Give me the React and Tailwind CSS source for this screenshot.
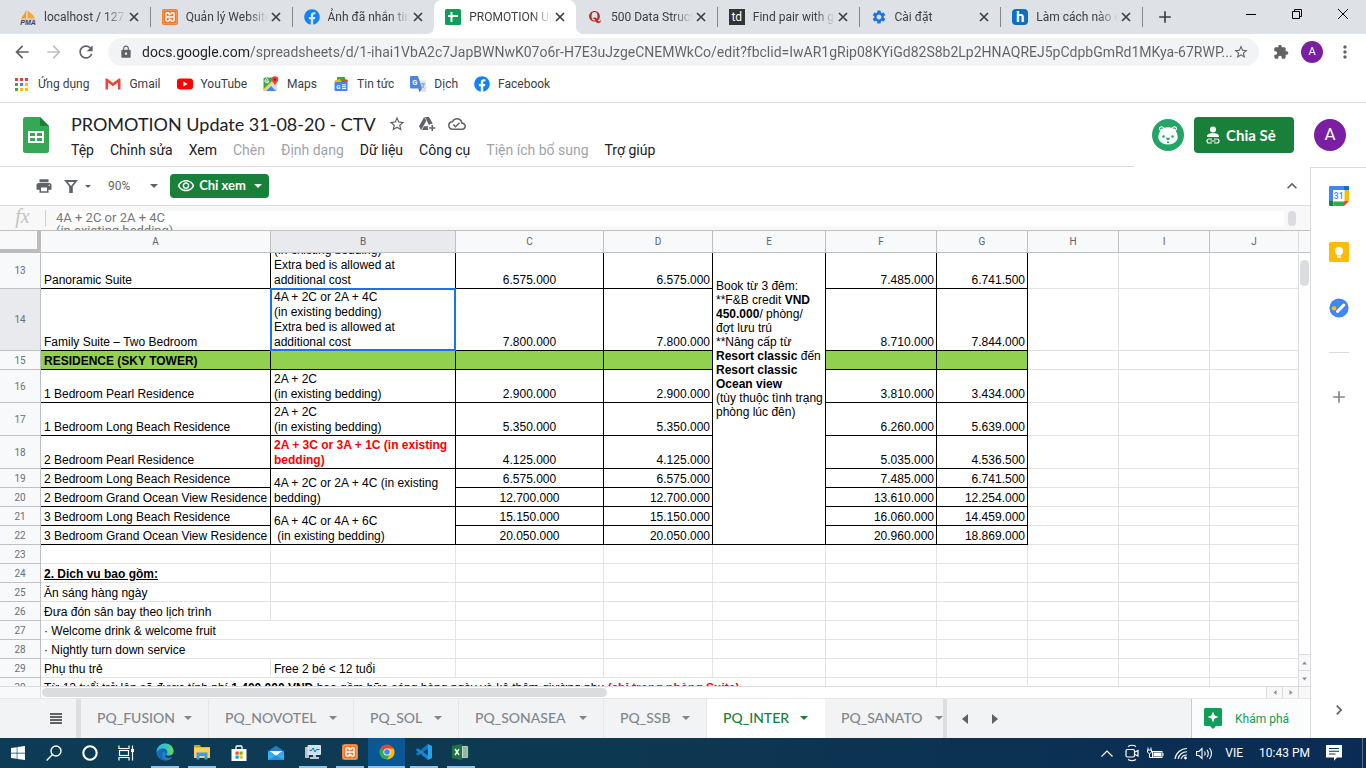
import React from "react";
import {
  MdArrowBack, MdArrowForward, MdRefresh, MdLock, MdStarBorder, MdExtension, MdMoreVert,
  MdOutlineCloudDone, MdPrint, MdOutlineVisibility,
  MdKeyboardArrowUp, MdKeyboardArrowRight, MdAdd, MdSettings,
} from "react-icons/md";
import { FaFacebook, FaQuora, FaWindows } from "react-icons/fa";

/* ---------- small drawings ---------- */

const PmaIcon = () => (
  <svg viewBox="0 0 16 16" className="size-4">
    <path d="M6.500 .5 L5.800 9.500 H1 C3 7 5 4 6.500 .5Z" fill="#f89c0e" />
    <path d="M7.500 1.500 C10 3 13.500 6 15 9.500 H7.200Z" fill="#f7a838" />
    <path d="M1 10 L15 10 L13.500 11.500 H2.500Z" fill="#c9c9c9" />
    <text x="8" y="15.800" textAnchor="middle" fontSize="7" fontWeight="700" fontStyle="italic" fontFamily="Liberation Sans" fill="#3f3c6b">PMA</text>
  </svg>
);

const XamppIcon = ({ className = "size-4" }) => (
  <svg viewBox="0 0 16 16" className={className}>
    <rect width="16" height="16" rx="2.500" fill="#f37623" />
    <rect x="1.200" y="1.200" width="13.600" height="13.600" rx="2" fill="none" stroke="#f9b98c" strokeWidth=".6" />
    <path d="M7.300 6 V5.200 A1.400 1.400 0 0 0 5.900 3.800 H5.300 A1.400 1.400 0 0 0 3.900 5.200 V6.400 A1.500 1.500 0 0 0 5.400 7.900 H10.700 A1.500 1.500 0 0 0 12.200 6.400 V5.200 A1.400 1.400 0 0 0 10.800 3.800 H10.200 A1.400 1.400 0 0 0 8.800 5.200 M5.400 7.900 A1.500 1.500 0 0 0 3.900 9.400 V10.800 A1.400 1.400 0 0 0 5.300 12.200 H5.900 A1.400 1.400 0 0 0 7.300 10.800 V10 M8.800 10.400 V10.800 A1.400 1.400 0 0 0 10.200 12.200 H10.800 A1.400 1.400 0 0 0 12.200 10.800 V9.400 A1.500 1.500 0 0 0 10.700 7.900" fill="none" stroke="#fff" strokeWidth="1.500" strokeLinecap="round" />
  </svg>
);

const SheetsTabIcon = () => (
  <svg viewBox="0 0 16 16" className="size-4">
    <rect width="16" height="16" rx="1.500" fill="#0f9d58" />
    <path d="M3 7 H13 M6.500 3 V13" stroke="#fff" strokeWidth="2" />
  </svg>
);

const CloseMark = () => (
  <svg viewBox="0 0 8 8" className="size-2 overflow-visible" stroke="#3c4043" strokeWidth="1.700">
    <path d="M0 0 L8 8 M8 0 L0 8" />
  </svg>
);

const AppsIcon = () => (
  <svg viewBox="0 0 15 13" className="h-[13px] w-[15px]">
    {["#ea4335", "#ea4335", "#ea4335", "#34a853", "#4285f4", "#fbbc05", "#34a853", "#fbbc05", "#fbbc05"].map((c, i) => (
      <rect key={i} x={(i % 3) * 5} y={Math.floor(i / 3) * 5} width="3" height="3" fill={c} />
    ))}
  </svg>
);

const GmailIcon = () => (
  <svg viewBox="0 0 16 12" className="h-3 w-4">
    <rect x="1" y="1" width="14" height="10.500" fill="#f2f2f2" />
    <path d="M.5 1.200 V11.500 H3 V4.500 L8 8.300 L13 4.500 V11.500 H15.500 V1.200 A1.200 1.200 0 0 0 14 .4 L8 5 L2 .4 A1.200 1.200 0 0 0 .5 1.200Z" fill="#e04a3f" />
  </svg>
);

const YoutubeIcon = () => (
  <svg viewBox="0 0 16 12" className="h-3 w-4">
    <rect y=".5" width="16" height="11" rx="3" fill="#f00" />
    <path d="M6.400 3.500 L10.600 6 L6.400 8.500Z" fill="#fff" />
  </svg>
);

const MapsIcon = () => (
  <svg viewBox="0 0 16 16" className="size-4">
    <rect x=".5" y="1.500" width="13.500" height="13.500" rx="1.500" fill="#34a853" />
    <path d="M1 15 L14 2.500 V13.500 A1.500 1.500 0 0 1 12.500 15Z" fill="#d8dce3" />
    <path d="M3 15 L8 10 L13 15Z" fill="#4285f4" />
    <path d="M1 14 L13.500 2" stroke="#fbd34c" strokeWidth="1.800" />
    <path d="M2.800 5 H5.800 A1.900 1.900 0 1 1 5.200 3.400" fill="none" stroke="#fff" strokeWidth="1" />
    <path d="M12 .3 A3.300 3.300 0 0 1 15.300 3.600 C15.300 6 12.600 6.800 12 10 C11.400 6.800 8.700 6 8.700 3.600 A3.300 3.300 0 0 1 12 .3Z" fill="#ea4335" />
    <circle cx="12" cy="3.600" r="1.200" fill="#8c1d18" />
  </svg>
);

const NewsIcon = () => (
  <svg viewBox="0 0 16 16" className="size-4">
    <rect x="4" y="1" width="8" height="5" rx=".6" fill="#34a853" />
    <path d="M10 2.500 L15 4 L14 8 H9Z" fill="#ea4335" />
    <path d="M1.500 4.500 L7 3 L9 8 H2Z" fill="#fbbc05" />
    <rect x="1.500" y="6" width="13" height="9" rx="1" fill="#4285f4" />
    <text x="5.300" y="12.800" textAnchor="middle" fontSize="6" fontWeight="700" fontFamily="Roboto" fill="#fff">G</text>
    <path d="M9 8.800 H13 M9 10.700 H13 M9 12.600 H13" stroke="#fff" strokeWidth="1" />
  </svg>
);

const TranslateIcon = () => (
  <svg viewBox="0 0 16 16" className="size-4">
    <path d="M6 4.500 H15 A1 1 0 0 1 16 5.500 V15 A1 1 0 0 1 15 16 H9Z" fill="#dfe3ea" />
    <path d="M1 0 H8 L12 12.500 H1 A1 1 0 0 1 0 11.500 V1 A1 1 0 0 1 1 0Z" fill="#4a86e8" />
    <path d="M8.500 12.500 H12 L9.500 16Z" fill="#3367d6" />
    <path d="M10.500 8 H15 M12.700 7 V8 M14 8 C13.500 10 12.500 11.500 11.500 12 M11.700 9.500 L14.300 12.500" stroke="#7d8ba1" strokeWidth=".8" fill="none" />
    <text x="4.800" y="9" textAnchor="middle" fontSize="7.500" fontWeight="700" fontFamily="Roboto" fill="#fff">G</text>
  </svg>
);

const SheetsLogo = () => (
  <svg viewBox="0 0 26 36" className="h-9 w-[26px]">
    <path d="M2.500 0 H17 L26 9 V33.500 A2.500 2.500 0 0 1 23.500 36 H2.500 A2.500 2.500 0 0 1 0 33.500 V2.500 A2.500 2.500 0 0 1 2.500 0Z" fill="#34a853" />
    <path d="M17 0 L26 9 H17Z" fill="#188038" />
    <rect x="5" y="14" width="16" height="12" fill="#fff" />
    <path d="M7 16 H12 V19 H7Z M14 16 H19 V19 H14Z M7 21 H12 V24 H7Z M14 21 H19 V24 H14Z" fill="#34a853" />
  </svg>
);

const DriveAddIcon = () => (
  <svg viewBox="0 0 18 16" className="h-4 w-[18px]" fill="#5f6368">
    <path d="M6.200 1 L1 10.200 L3.200 14 L8.400 4.800Z" />
    <path d="M7 1 H11 L14.800 7.800 C13.300 7.600 12 8 11 9Z" />
    <path d="M6 10.200 H10 C9.700 11.600 9.800 12.800 10.500 14 H4Z" />
    <path d="M13.500 9 H15 V11.300 H17.300 V12.800 H15 V15 H13.500 V12.800 H11.300 V11.300 H13.500Z" />
  </svg>
);

const BearIcon = () => (
  <svg viewBox="0 0 32 32" className="size-8 shrink-0">
    <circle cx="16" cy="16" r="16" fill="#23a566" />
    <path d="M7 10 C6.500 7.500 10 6 12 8.800 Q16 7.600 20 8.800 C22 6 25.500 7.500 25 10 C24.900 11 24.300 11.500 23.800 12 C25.500 15 26.500 18.500 25 21 C23 24.300 19.500 25.500 16 25.500 C12.500 25.500 9 24.300 7 21 C5.500 18.500 6.500 15 8.200 12 C7.700 11.500 7.100 11 7 10Z" fill="#fff" />
    <path d="M8.500 10.300 C8.300 8.900 9.800 8.500 10.700 9.500 M23.500 10.300 C23.700 8.900 22.200 8.500 21.300 9.500" stroke="#23a566" strokeWidth="1.200" fill="none" />
    <circle cx="11.500" cy="17.500" r="1.300" fill="#23a566" />
    <circle cx="20.500" cy="17.500" r="1.300" fill="#23a566" />
    <path d="M14 18.800 H18 L17 21 H15Z M15 22.500 H17 V24 H15Z" fill="#23a566" />
  </svg>
);

const ShareIcon = () => (
  <svg viewBox="0 0 14 18" className="h-[18px] w-3.5" fill="none">
    <circle cx="7" cy="3.500" r="3" fill="#fff" />
    <path d="M1 10.500 C1 7.500 4.500 7.200 7 7.200 S13 7.500 13 10.500 V11 H1Z" fill="#fff" />
    <path d="M6 13 H3 A2 2 0 0 0 3 17 H6 M8 13 H11 A2 2 0 0 1 11 17 H8 M4.500 15 H9.500" stroke="#fff" strokeWidth="1.200" />
  </svg>
);

const FilterIcon = () => (
  <svg viewBox="0 0 14 13" className="h-[13px] w-3.5">
    <path fillRule="evenodd" d="M0 0 H14 L8.800 6.500 V13 H5.200 V6.500Z M3.700 2 L7 6.100 L10.300 2Z" fill="#5f6368" />
  </svg>
);

const Caret = ({ className }) => (
  <svg viewBox="0 0 8 4" className={className} fill="currentColor"><path d="M0 0 H8 L4 4Z" /></svg>
);

const ArrowMark = ({ dir, className }) => {
  const d = { up: "M0 7 L4 1 L8 7Z", down: "M0 1 H8 L4 7Z", left: "M7 0 V8 L1 4Z", right: "M1 0 V8 L7 4Z" }[dir];
  return <svg viewBox="0 0 8 8" preserveAspectRatio="none" className={className} fill="currentColor"><path d={d} /></svg>;
};

const CalendarIcon = () => (
  <svg viewBox="0 0 20 20" className="size-5">
    <path d="M1 0 H15 V4.500 H4.500 V15 H0 V1 A1 1 0 0 1 1 0Z" fill="#4285f4" />
    <path d="M15 0 H18.800 A1 1 0 0 1 20 1 V4.500 H15Z" fill="#1967d2" />
    <path d="M15 4.500 H20 V15 H15Z" fill="#fbbc04" />
    <path d="M0 15 H4.500 V20 H1 A1 1 0 0 1 0 19Z" fill="#188038" />
    <path d="M4.500 15 H15 V20 H4.500Z" fill="#34a853" />
    <path d="M15 15 H20 L15 20Z" fill="#ea4335" />
    <rect x="4" y="4" width="11.500" height="11.500" fill="#fff" />
    <text x="9.700" y="13" textAnchor="middle" fontSize="8.500" fontWeight="500" fontFamily="Roboto" fill="#4285f4">31</text>
  </svg>
);

const KeepIcon = () => (
  <svg viewBox="0 0 20 20" className="size-5">
    <rect width="20" height="20" rx="1.500" fill="#fbbc04" />
    <circle cx="10" cy="9" r="4" fill="#fff" />
    <rect x="8" y="11" width="4" height="2.500" fill="#fff" />
    <rect x="8" y="14.300" width="4" height="1.400" fill="#fff" />
  </svg>
);

const TasksIcon = () => (
  <svg viewBox="0 0 20 20" className="size-5">
    <circle cx="10" cy="10" r="9.600" fill="#4285f4" />
    <circle cx="5" cy="10.200" r="2.300" fill="#fbbc04" />
    <path d="M8.500 13.500 L14.800 7" stroke="#fff" strokeWidth="3" strokeLinecap="round" />
  </svg>
);

const ExploreIcon = () => (
  <svg viewBox="0 0 18 21" className="h-[21px] w-[18px]">
    <path d="M1.500 0 H16.500 A1.500 1.500 0 0 1 18 1.500 V16.500 A1.500 1.500 0 0 1 16.500 18 H12 L9 21 L6 18 H1.500 A1.500 1.500 0 0 1 0 16.500 V1.500 A1.500 1.500 0 0 1 1.500 0Z" fill="#0f9d58" />
    <path d="M9 3.500 L10.600 7.400 L14.500 9 L10.600 10.600 L9 14.500 L7.400 10.600 L3.500 9 L7.400 7.400Z" fill="#fff" />
  </svg>
);

/* ---------- taskbar drawings ---------- */

const SearchGlass = () => (
  <svg viewBox="0 0 16 16" className="size-4" fill="none" stroke="#fff" strokeWidth="1.400">
    <circle cx="10" cy="6" r="5" /><path d="M6.500 9.500 L.6 15.500" />
  </svg>
);
const CortanaRing = () => (
  <svg viewBox="0 0 16 16" className="size-4"><circle cx="8" cy="8" r="6.700" fill="none" stroke="#fff" strokeWidth="2.100" /></svg>
);
const TaskView = () => (
  <svg viewBox="0 0 17 16" className="h-4 w-[17px]" fill="none" stroke="#fff" strokeWidth="1.200">
    <path d="M1 .5 V3.500 H11 V.5 M1 15.500 V12.500 H11 V15.500" /><rect x="1.500" y="5.500" width="9" height="5" /><path d="M14.500 .5 V15.500" /><path d="M14.500 4 V7" strokeWidth="3" />
  </svg>
);
const EdgeIcon = () => (
  <svg viewBox="0 0 18 18" className="size-[18px]">
    <defs>
      <linearGradient id="edgeTop" x1="0" x2="1"><stop offset="0" stopColor="#2bb4ee" /><stop offset=".6" stopColor="#35c8b4" /><stop offset="1" stopColor="#6fdc4d" /></linearGradient>
    </defs>
    <circle cx="9" cy="9" r="8.500" fill="#1d86d8" />
    <path d="M10.300 11.400 L17.500 9.500 L17.500 14 L13 17.500 L9 14Z" fill="#0c3a56" />
    <path d="M.6 8.500 C1.500 3.200 5 .5 9.200 .5 C14 .5 17.500 4 17.500 8 C17.500 11 15.400 12.500 13 12.500 C11.500 12.500 10.300 12 10.300 11.400 C10.300 10.900 11.300 10.400 11.300 9 C11.300 7 9.300 5.500 6.800 5.500 C4 5.500 1.800 6.800 .6 8.500Z" fill="url(#edgeTop)" />
    <path d="M6.800 9 C5 12 7 17 12 17 C9.500 17.800 3.500 17.500 1.500 12.500 C.5 9.500 3 6 6.800 5.500 C9.500 5.500 11.300 7 11.300 9 C11.300 9.900 10.300 10.900 10.300 11.400 C9 11.500 8.300 10.500 8.500 8.600Z" fill="#1668b8" />
    <path d="M6.800 9 C6 13 9 14.800 12 14.800 C13.800 14.800 15.300 14.300 16.300 13.500 C15 16 13 17.300 11 17.300 C7 17 4.800 12.500 6.800 9Z" fill="#1a7fd4" />
  </svg>
);
const FolderIcon = () => (
  <svg viewBox="0 0 18 16" className="h-4 w-[18px]">
    <path d="M1 1 H7 L8 3 H17 V6 H1Z" fill="#dd9b14" />
    <path d="M1 3.500 H17 V14 H1Z" fill="#fbd15b" />
    <path d="M3.500 15.500 V8.500 H14.500 V15.500 H11.500 V12 H6.500 V15.500Z" fill="#3d9be8" />
  </svg>
);
const StoreIcon = () => (
  <svg viewBox="0 0 16 17" className="h-[17px] w-4">
    <path d="M5 4.500 V2 A1 1 0 0 1 6 1 H10 A1 1 0 0 1 11 2 V4.500" fill="none" stroke="#fff" strokeWidth="1.300" />
    <path d="M.5 4 H15.500 V16 H.5Z" fill="#fff" />
    <rect x="4.500" y="6.500" width="3.200" height="3.200" fill="#f25022" /><rect x="8.500" y="6.500" width="3.200" height="3.200" fill="#7fba00" />
    <rect x="4.500" y="10.500" width="3.200" height="3.200" fill="#00a4ef" /><rect x="8.500" y="10.500" width="3.200" height="3.200" fill="#ffb900" />
  </svg>
);
const MailIcon = () => (
  <svg viewBox="0 0 18 16" className="h-4 w-[18px]">
    <path d="M1 6 L9 .8 L17 6 V15 H1Z" fill="#1b7fd0" />
    <path d="M2.500 6 H15.500 L9 11Z" fill="#f4f8fb" />
    <path d="M1 6 L9 11 L17 6 V15 H1Z" fill="#32b0f2" />
    <path d="M1 15 L9 10.500 L17 15Z" fill="#1e93e0" />
  </svg>
);
const MonitorIcon = () => (
  <svg viewBox="0 0 18 16" className="h-4 w-[18px]">
    <rect x="1" y="3" width="4" height="11" fill="#b9c0c6" />
    <rect x="3.500" y="1" width="13.500" height="10" rx="1" fill="#dfe4e8" />
    <rect x="5" y="2.500" width="10.500" height="7" fill="#bfe3f7" />
    <path d="M5.500 6.500 H7.500 L9 4 L11 8 L12.500 5.500 H15.500" stroke="#1274b5" fill="none" />
    <path d="M9 11 H12 V13 H15 V15 H6 V13 H9Z" fill="#c5ccd1" />
  </svg>
);
const ChromeIcon = () => (
  <svg viewBox="0 0 16 16" className="size-4">
    <path d="M8 8 L1.500 4.300 A7.500 7.500 0 0 1 14.500 4.300Z" fill="#ea4335" />
    <path d="M8 8 L1.500 4.250 A7.500 7.500 0 0 0 8 15.500 L11.500 9.500Z" fill="#34a853" />
    <path d="M8 4.500 H14.700 A7.500 7.500 0 0 1 8 15.500 L11 9.500Z" fill="#fbbc05" />
    <circle cx="8" cy="8" r="3.600" fill="#fff" /><circle cx="8" cy="8" r="2.800" fill="#4285f4" />
  </svg>
);
const VsCodeIcon = () => (
  <svg viewBox="0 0 18 18" className="size-[18px]">
    <path d="M13 1 V5.500 L3 12.800 L1 11.500 V10.800Z" fill="#0a79c4" />
    <path d="M13 17 V12.500 L3 5.200 L1 6.500 V7.200Z" fill="#1287d4" />
    <path d="M12.800 1 L17 3 V15 L12.800 17Z" fill="#25a4ef" />
  </svg>
);
const ExcelIcon = () => (
  <svg viewBox="0 0 17 16" className="h-4 w-[17px]">
    <path d="M9 2 H16 V14 H9Z" fill="#fff" stroke="#1f7244" strokeWidth=".8" />
    <path d="M10.500 4 H15 M10.500 6 H15 M10.500 8 H15 M10.500 10 H15 M10.500 12 H15" stroke="#1f7244" strokeWidth="1" />
    <path d="M0 1.800 L10 0 V16 L0 14.200Z" fill="#1f7244" />
    <path d="M3 5 L7 11 M7 5 L3 11" stroke="#fff" strokeWidth="1.400" />
  </svg>
);

const MeetNow = () => (
  <svg viewBox="0 0 14 18" className="h-[18px] w-3.5" fill="none" stroke="#fff" strokeWidth="1.200">
    <path d="M3 2.500 Q7 0 11 2.500 M3 15.500 Q7 18 11 15.500" /><rect x="1" y="5.500" width="8.500" height="7.500" rx="1.500" /><path d="M10 8 L13 6.500 V12 L10 10.500" />
  </svg>
);
const Battery = () => (
  <svg viewBox="0 0 17 13" className="h-[13px] w-[17px]" fill="none" stroke="#fff">
    <rect x="5.500" y="4.500" width="9.500" height="6" /><rect x="7" y="6" width="6.500" height="3" fill="#fff" /><path d="M16 6 V9 M1 .5 V3 M4 .5 V3 M.5 3 H4.500 V5 L2.500 7 L.5 5Z M2.500 7 V10.500 H5" />
  </svg>
);
const Wifi = () => (
  <svg viewBox="0 0 14 14" className="size-3.5" fill="none" stroke="#fff" strokeWidth="1.100">
    <path d="M1 13 A12 12 0 0 1 13 2.500 M4 13 A9 9 0 0 1 13 5.800 M7 13 A6 6 0 0 1 13 9" /><circle cx="11.500" cy="12" r="1.400" fill="#fff" stroke="none" />
  </svg>
);
const Speaker = () => (
  <svg viewBox="0 0 17 13" className="h-[13px] w-[17px]" fill="none" stroke="#fff" strokeWidth="1.100">
    <path d="M.6 4.500 H3 L6 1.500 V11.500 L3 8.500 H.6Z M8.500 4.500 Q9.800 6.500 8.500 8.500 M11 2.800 Q13.500 6.500 11 10.200 M13.500 1 Q17.500 6.500 13.500 12" />
  </svg>
);
const NotifyIcon = () => (
  <svg viewBox="0 0 16 16" className="size-4">
    <path d="M0 0 H16 V12.500 H11 L8 15.800 V12.500 H0Z" fill="#fff" /><path d="M3 3.500 H13 M3 6.200 H13 M3 9 H9.500" stroke="#0b2f50" strokeWidth="1.100" />
  </svg>
);

/* ---------- browser chrome ---------- */

const browserTabs = [
  { title: "localhost / 127.0.0.1", icon: <PmaIcon />, sep: true },
  { title: "Quản lý Website", icon: <XamppIcon />, sep: true },
  { title: "Ảnh đã nhắn tin", icon: <FaFacebook className="size-4 text-[#1183f6]" /> },
  { title: "PROMOTION Update", icon: <SheetsTabIcon />, active: true },
  { title: "500 Data Structures", icon: <FaQuora className="size-3.5 text-[#b92b27]" />, sep: true },
  { title: "Find pair with given", icon: <span className="grid size-4 place-items-center bg-[#333] text-[12px] leading-none text-white">td</span>, sep: true },
  { title: "Cài đặt", icon: <MdSettings className="size-4 text-[#1a73e8]" />, sep: true },
  { title: "Làm cách nào để", icon: <span className="grid size-4 place-items-center rounded-sm bg-[#0c6fc0] text-[15px] leading-none font-bold text-white">h</span>, sep: true },
];

function TabStrip() {
  return (
    <div className="flex h-[34px] shrink-0 bg-[#dee1e6] pl-[9px] text-[12px] text-[#3c4043]">
      <div className="flex w-[1134px] min-w-0">
        {browserTabs.map((t) => (
          <div
            key={t.title}
            className={
              "relative flex min-w-0 flex-1 items-center " +
              (t.active
                ? "rounded-t-lg bg-white before:absolute before:bottom-0 before:-left-2 before:size-2 before:bg-[radial-gradient(circle_at_0_0,transparent_8px,white_8px)] after:absolute after:-right-2 after:bottom-0 after:size-2 after:bg-[radial-gradient(circle_at_100%_0,transparent_8px,white_8px)]"
                : "")
            }
          >
            <a href="#tab" className="flex min-w-0 flex-1 items-center gap-2 pl-[11px]">
              <span className="grid size-4 shrink-0 place-items-center">{t.icon}</span>
              <span className="min-w-0 flex-1 overflow-hidden whitespace-nowrap [mask-image:linear-gradient(90deg,#000_75%,transparent)]">{t.title}</span>
            </a>
            <button aria-label="Close tab" className="mr-2 grid size-4 shrink-0 place-items-center"><CloseMark /></button>
            {t.sep && <span className="h-5 w-px bg-[#80868b]" />}
          </div>
        ))}
      </div>
      <button aria-label="New tab" className="ml-3 grid w-5 place-items-center"><MdAdd className="size-5 text-[#3c4043]" /></button>
      <div className="ml-auto flex h-7 text-black">
        <button aria-label="Minimize" className="grid w-[46px] place-items-center"><svg viewBox="0 0 10 10" className="size-2.5"><path d="M0 5.500 H10" stroke="currentColor" /></svg></button>
        <button aria-label="Restore" className="grid w-[46px] place-items-center"><svg viewBox="0 0 10 10" className="size-2.5" fill="none" stroke="currentColor"><path d="M.5 2.500 H7.500 V9.500 H.5Z M2.500 2.500 V.5 H9.500 V7.500 H7.500" /></svg></button>
        <button aria-label="Close" className="grid w-[46px] place-items-center"><svg viewBox="0 0 10 10" className="size-2.5" stroke="currentColor"><path d="M0 0 L10 10 M10 0 L0 10" /></svg></button>
      </div>
    </div>
  );
}

function AddressBar() {
  return (
    <div className="flex h-9 shrink-0 items-center pr-[11px] pl-3 text-[#5f6368]">
      <button aria-label="Back" className="mr-3"><MdArrowBack className="size-5" /></button>
      <button aria-label="Forward" className="mr-3 text-[#bdc1c6]"><MdArrowForward className="size-5" /></button>
      <button aria-label="Reload"><MdRefresh className="size-5" /></button>
      <div className="ml-3 flex h-7 min-w-0 flex-1 items-center rounded-full bg-[#f1f3f4] pr-2.5 pl-[11px]">
        <MdLock className="size-3.5 shrink-0" />
        <input
          aria-label="Address"
          readOnly
          value="docs.google.com/spreadsheets/d/1-ihai1VbA2c7JapBWNwK07o6r-H7E3uJzgeCNEMWkCo/edit?fbclid=IwAR1gRip08KYiGd82S8b2Lp2HNAQREJ5pCdpbGmRd1MKya-67RWP..."
          className="ml-[9px] min-w-0 flex-1 bg-[linear-gradient(90deg,#202124_108px,#5f6368_108px)] bg-clip-text text-[14px] text-transparent outline-none"
        />
        <button aria-label="Bookmark this page"><MdStarBorder className="size-4" /></button>
      </div>
      <button aria-label="Extensions" className="ml-3.5"><MdExtension className="size-4" /></button>
      <button aria-label="Profile" className="ml-3 grid size-[22px] place-items-center rounded-full bg-[#7b1fa2] text-[11px] text-white">A</button>
      <button aria-label="Menu" className="ml-3"><MdMoreVert className="size-5" /></button>
    </div>
  );
}

const bookmarks = [
  ["Ứng dụng", <AppsIcon />], ["Gmail", <GmailIcon />], ["YouTube", <YoutubeIcon />], ["Maps", <MapsIcon />],
  ["Tin tức", <NewsIcon />], ["Dịch", <TranslateIcon />], ["Facebook", <FaFacebook className="size-4 text-[#1183f6]" />],
];

function Bookmarks() {
  return (
    <nav className="flex h-[33px] shrink-0 items-center gap-4 border-b border-[#dadce0] pb-1 pl-[15px] text-[12px] text-[#3c4043]">
      {bookmarks.map(([label, icon]) => (
        <a key={label} href="#bookmark" className="flex items-center gap-2">{icon}{label}</a>
      ))}
    </nav>
  );
}

/* ---------- document header and toolbars ---------- */

const menus = [
  ["Tệp"], ["Chỉnh sửa"], ["Xem"], ["Chèn", true], ["Định dạng", true], ["Dữ liệu"], ["Công cụ"], ["Tiện ích bổ sung", true], ["Trợ giúp"],
];

function DocHeader() {
  return (
    <header className="flex h-16 shrink-0">
      <div className="flex min-w-0 flex-1 border-b border-[#dadce0] pt-3.5 pl-[23px]">
        <SheetsLogo />
        <div className="-mt-[5px] ml-[22px]">
          <div className="flex h-6 items-center text-[#5f6368]">
            <h1 className="font-[Lato] text-[18px] leading-6 whitespace-nowrap text-[#202124]">PROMOTION Update 31-08-20 - CTV</h1>
            <button aria-label="Star" className="ml-3"><MdStarBorder className="size-[18px]" /></button>
            <button aria-label="Add to Drive" className="ml-3"><DriveAddIcon /></button>
            <button aria-label="Document status" className="ml-3"><MdOutlineCloudDone className="size-[18px]" /></button>
          </div>
          <nav className="mt-1 flex h-5 items-center gap-4 text-[14px] whitespace-nowrap">
            {menus.map(([m, off]) => (
              <button key={m} className={off ? "text-[#a0a4a8]" : "text-[#202124]"}>{m}</button>
            ))}
          </nav>
        </div>
      </div>
      <div className="flex w-[232px] items-start pt-3.5 pr-5 pl-[18px]">
        <button aria-label="Anonymous viewer" className="mt-0.5"><BearIcon /></button>
        <button className="ml-2.5 flex h-9 w-[100px] items-center gap-1.5 rounded bg-[#188038] pl-3 font-[Lato] text-[15px] font-bold text-white"><ShareIcon />Chia Sẻ</button>
        <button aria-label="Account" className="mt-0.5 ml-5 grid size-8 place-items-center rounded-full bg-[#7b1fa2] text-[17px] text-white">A</button>
      </div>
    </header>
  );
}

function Toolbar() {
  return (
    <div className="flex h-[39px] shrink-0 items-center border-b border-[#dadce0] pr-2 pl-[35px] text-[#5f6368]">
      <button aria-label="Print"><MdPrint className="size-[18px]" /></button>
      <button aria-label="Filter" className="ml-[11px] flex items-center gap-[7px]"><FilterIcon /><Caret className="h-[3px] w-1.5" /></button>
      <label className="ml-[17px] flex items-center text-[12px]">
        <span className="sr-only">Zoom</span>
        <select className="w-[42px] appearance-none bg-transparent outline-none"><option>90%</option></select>
        <Caret className="h-1 w-2" />
      </label>
      <button className="ml-3 flex h-6 w-[99px] items-center justify-center gap-1 rounded bg-[#188038] font-[Lato] text-[13px] font-bold text-white">
        <MdOutlineVisibility className="size-[18px]" />Chỉ xem<Caret className="ml-1 h-1 w-2" />
      </button>
      <button aria-label="Hide menus" className="ml-auto"><MdKeyboardArrowUp className="size-5" /></button>
    </div>
  );
}

function FormulaBar() {
  return (
    <div className="flex h-[25px] shrink-0 border-b border-[#c0c0c0] bg-[#f8f8f8] text-[#777]">
      <span className="w-[45px] text-center font-['Liberation_Serif'] text-[20px] leading-5 text-[#c4c4c4] italic">fx</span>
      <span className="mt-1 h-[17px] w-px bg-[#d0d0d0]" />
      <textarea
        aria-label="Formula"
        readOnly
        value={"4A + 2C or 2A + 4C\n(in existing bedding)"}
        className="mt-[5px] ml-2.5 h-[19px] min-w-0 flex-1 resize-none overflow-hidden bg-[linear-gradient(#fff_15px,#f8f8f8_15px)] text-[13px] leading-[13px] outline-none"
      />
      <span className="mt-[5px] mr-3.5 ml-1 h-[15px] w-2 rounded-full bg-[#dadce0]" />
    </div>
  );
}

/* ---------- grid ---------- */

const letters = ["A", "B", "C", "D", "E", "F", "G", "H", "I", "J"];

const extraBed = ["Extra bed is allowed at", "additional cost"];
const inBed = "(in existing bedding)";

const rows = [
  { n: 13, h: "h-9", a: "Panoramic Suite", b: [inBed, ...extraBed], clip: true, v: ["6.575.000", "6.575.000", "7.485.000", "6.741.500"] },
  { n: 14, h: "h-[62px]", a: "Family Suite – Two Bedroom", b: ["4A + 2C or 2A + 4C", inBed, ...extraBed], sel: true, v: ["7.800.000", "7.800.000", "8.710.000", "7.844.000"] },
  { n: 15, h: "h-[19px]", a: "RESIDENCE (SKY TOWER)", b: [], green: true, v: ["", "", "", ""] },
  { n: 16, h: "h-[33px]", a: "1 Bedroom Pearl Residence", b: ["2A + 2C", inBed], v: ["2.900.000", "2.900.000", "3.810.000", "3.434.000"] },
  { n: 17, h: "h-[33px]", a: "1 Bedroom Long Beach Residence", b: ["2A + 2C", inBed], v: ["5.350.000", "5.350.000", "6.260.000", "5.639.000"] },
  { n: 18, h: "h-[33px]", a: "2 Bedroom Pearl Residence", b: ["2A + 3C or 3A + 1C (in existing", "bedding)"], red: true, v: ["4.125.000", "4.125.000", "5.035.000", "4.536.500"] },
  { n: 19, h: "h-[19px]", a: "2 Bedroom Long Beach Residence", b: ["4A + 2C or 2A + 4C (in existing", "bedding)"], span: 2, v: ["6.575.000", "6.575.000", "7.485.000", "6.741.500"] },
  { n: 20, h: "h-[19px]", a: "2 Bedroom Grand Ocean View Residence", v: ["12.700.000", "12.700.000", "13.610.000", "12.254.000"] },
  { n: 21, h: "h-[19px]", a: "3 Bedroom Long Beach Residence", b: ["6A + 4C or 4A + 6C", "\u00a0(in existing bedding)"], span: 2, v: ["15.150.000", "15.150.000", "16.060.000", "14.459.000"] },
  { n: 22, h: "h-[19px]", a: "3 Bedroom Grand Ocean View Residence", v: ["20.050.000", "20.050.000", "20.960.000", "18.869.000"] },
];

const notes = [
  { n: 23, a: "" },
  { n: 24, a: <b className="underline">2. Dich vu bao gồm:</b> },
  { n: 25, a: "Ăn sáng hàng ngày" },
  { n: 26, a: "Đưa đón sân bay theo lịch trình" },
  { n: 27, a: "· Welcome drink & welcome fruit", span: 2 },
  { n: 28, a: "· Nightly turn down service", span: 2 },
  { n: 29, a: "Phụ thu trẻ", b: "Free 2 bé < 12 tuổi" },
  {
    n: 30, span: 5,
    a: <>Từ 12 tuổi trở lên sẽ được tính phí <b>1.400.000 VND</b> bao gồm bữa sáng hàng ngày và kê thêm giường phụ <b className="text-[#f00]">(chỉ trong phòng Suite)</b></>,
  },
];

const black = "border-r border-b border-black";
const grey = "border-r border-b border-[#e2e3e3]";

const RowHead = ({ n, active }) => (
  <th className={"border-r border-b border-[#c0c0c0] text-center align-middle font-[Roboto] text-[10px] font-normal text-[#6b7075] " + (active ? "bg-[#e8eaed]" : "bg-[#f8f9fa]")}>{n}</th>
);

function Grid() {
  return (
    <div className="min-w-0 flex-1 overflow-hidden border-r border-[#dadce0]">
      <table className="w-full table-fixed border-separate border-spacing-0 font-['Liberation_Sans'] text-[12px] leading-[15px] text-black">
        <colgroup>
          <col className="w-[41px]" /><col className="w-[230px]" /><col className="w-[185px]" /><col className="w-[148px]" /><col className="w-[109px]" />
          <col className="w-[113px]" /><col className="w-[111px]" /><col className="w-[91px]" /><col className="w-[91px]" /><col className="w-[91px]" /><col />
        </colgroup>
        <thead>
          <tr className="h-[22px] font-[Roboto] text-[10px] text-[#5f6368]">
            <td className="border-r-4 border-b-4 border-[#bcbcbc] bg-[#f8f9fa]" />
            {letters.map((l) => (
              <th key={l} className={"border-b border-[#c0c0c0] font-normal " + (l === "J" ? "" : "border-r ") + (l === "B" ? "bg-[#e8eaed]" : "bg-[#f8f9fa]")}>{l}</th>
            ))}
          </tr>
        </thead>
        <tbody>
          {rows.map((r) => {
            const bg = r.green ? "bg-[#92d050] " : "";
            return (
              <tr key={r.n} className={r.h}>
                <RowHead n={r.n} active={r.sel} />
                <td className={bg + black + " pl-[3px] align-bottom whitespace-nowrap " + (r.green ? "font-bold" : "")}>{r.a}</td>
                {r.b && (
                  <td rowSpan={r.span || 1} className={"relative pl-[3px] align-bottom whitespace-nowrap " + bg + black + (r.red ? " font-bold text-[#f00]" : "")}>
                    {r.clip
                      ? <div className="flex h-[35px] flex-col justify-end overflow-hidden">{r.b.map((t) => <div key={t} className="shrink-0">{t}</div>)}</div>
                      : r.b.map((t) => <div key={t}>{t}</div>)}
                    {r.sel && <div className="pointer-events-none absolute -inset-px border-2 border-[#1a73e8]" />}
                  </td>
                )}
                <td className={bg + black + " text-center align-bottom"}>{r.v[0]}</td>
                <td className={bg + black + " pr-0.5 text-right align-bottom"}>{r.v[1]}</td>
                {r.n === 13 && (
                  <td rowSpan={10} className={black + " pt-[26px] pl-[3px] align-top leading-[14px] whitespace-nowrap"}>
                    Book từ 3 đêm:<br />**F&amp;B credit <b>VND</b><br /><b>450.000</b>/ phòng/<br />đợt lưu trú<br />**Nâng cấp từ<br />
                    <b>Resort classic</b> đến<br /><b>Resort classic</b><br /><b>Ocean view</b><br />(tùy thuộc tình trạng<br />phòng lúc đên)
                  </td>
                )}
                <td className={bg + black + " pr-0.5 text-right align-bottom"}>{r.v[2]}</td>
                <td className={bg + black + " pr-0.5 text-right align-bottom"}>{r.v[3]}</td>
                <td className={grey} /><td className={grey} /><td className="border-b border-[#e2e3e3]" />
              </tr>
            );
          })}
          {notes.map((r) => (
            <tr key={r.n} className="h-[19px]">
              <RowHead n={r.n} />
              <td colSpan={r.span || 1} className={grey + " pl-[3px] align-bottom whitespace-nowrap"}>{r.a}</td>
              {letters.slice(r.span || 1).map((l) => (
                <td key={l} className={(l === "J" ? "border-b border-[#e2e3e3]" : grey) + " pl-[3px] align-bottom whitespace-nowrap"}>{l === "B" ? r.b : null}</td>
              ))}
            </tr>
          ))}
        </tbody>
      </table>
    </div>
  );
}

function GridArea() {
  return (
    <>
      <div className="flex min-h-0 flex-1 border-b border-[#dadce0]">
        <Grid />
        <div className="flex w-[11px] flex-col items-center text-[#8f8f8f]">
          <div className="h-[22px] w-full border-b border-[#c0c0c0] bg-[#f8f9fa]" />
          <div className="mt-[7px] h-[26px] w-[9px] rounded-full bg-[#dadce0]" />
          <button aria-label="Scroll up" className="mt-auto grid h-4 w-full place-items-center border-t border-[#dadce0] bg-[#f8f8f8]"><ArrowMark dir="up" className="h-1 w-[5px]" /></button>
          <button aria-label="Scroll down" className="grid h-4 w-full place-items-center border-t border-[#dadce0] bg-[#f8f8f8]"><ArrowMark dir="down" className="h-1 w-[5px]" /></button>
        </div>
      </div>
      <div className="flex h-[11px] shrink-0 text-[#8f8f8f]">
        <div className="w-[41px] border-r border-[#dadce0] bg-[#f8f9fa]" />
        <div className="mt-px ml-px h-[9px] w-[565px] rounded-full bg-[#dadce0]" />
        <button aria-label="Scroll left" className="ml-auto grid w-4 place-items-center border-l border-[#dadce0] bg-[#f8f8f8]"><ArrowMark dir="left" className="h-[5px] w-1" /></button>
        <button aria-label="Scroll right" className="grid w-4 place-items-center border-l border-[#dadce0] bg-[#f8f8f8]"><ArrowMark dir="right" className="h-[5px] w-1" /></button>
        <div className="w-3 border-l border-[#dadce0] bg-[#f8f8f8]" />
      </div>
    </>
  );
}

const sheetTabs = [
  ["PQ_FUSION", "w-[128px]"], ["PQ_NOVOTEL", "w-[145px]"], ["PQ_SOL", "w-[105px]"], ["PQ_SONASEA", "w-[145px]"],
  ["PQ_SSB", "w-[103px]"], ["PQ_INTER", "w-[118px]"], ["PQ_SANATO", "w-[118px]"],
];

function SheetTabs() {
  return (
    <div className="flex h-10 shrink-0 border-t border-[#e6e8ea] bg-[#f1f3f4] text-[#5f6368]">
      <button aria-label="All sheets" className="ml-[50px] grid w-3 place-items-center">
        <svg viewBox="0 0 12 11" className="h-[11px] w-3"><path d="M0 1 H12 M0 4 H12 M0 7 H12 M0 10 H12" stroke="#5f6368" strokeWidth="2" /></svg>
      </button>
      <span className="ml-3.5 w-[5px] bg-[#dcdedf]" />
      <div className="flex">
        {sheetTabs.map(([name, w]) => {
          const on = name === "PQ_INTER";
          return (
            <button
              key={name}
              className={"flex items-center justify-between border-r pr-4 pb-0.5 pl-4 font-[Lato] text-[14px] font-medium last:border-r-0 last:pr-0 " + w + (on ? " border-white bg-white text-[#188038]" : " border-[#e4e6e8] text-[#80868b]")}
            >
              {name}<Caret className="h-1 w-2 shrink-0" />
            </button>
          );
        })}
      </div>
      <span className="w-1 bg-[#dcdedf]" />
      <button aria-label="Previous sheets" className="ml-3.5"><ArrowMark dir="left" className="h-2.5 w-2" /></button>
      <button aria-label="Next sheets" className="ml-[22px]"><ArrowMark dir="right" className="h-2.5 w-2" /></button>
      <button className="ml-auto flex w-[119px] items-center gap-[13px] border-l border-[#c8cacc] bg-[#fbfcfc] pl-3 text-[12px] text-[#0f9d58]"><ExploreIcon />Khám phá</button>
    </div>
  );
}

function SidePanel() {
  return (
    <aside className="flex w-14 shrink-0 flex-col items-center border-t border-l border-[#dadce0] pt-[18px] text-[#5f6368]">
      <button aria-label="Calendar"><CalendarIcon /></button>
      <button aria-label="Keep" className="mt-9"><KeepIcon /></button>
      <button aria-label="Tasks" className="mt-9"><TasksIcon /></button>
      <span className="mt-[34px] h-px w-5 shrink-0 bg-[#dadce0]" />
      <button aria-label="Add-ons" className="mt-[34px]"><MdAdd className="size-5 text-[#80868b]" /></button>
      <button aria-label="Hide side panel" className="mt-auto mb-[18px]"><MdKeyboardArrowRight className="size-5" /></button>
    </aside>
  );
}

/* ---------- desktop taskbar ---------- */

const system = [
  ["Start", <FaWindows className="size-4" />], ["Search", <SearchGlass />], ["Cortana", <CortanaRing />], ["Task view", <TaskView />],
];
const pinned = [
  ["Edge", <EdgeIcon />, true], ["Explorer", <FolderIcon />, true], ["Store", <StoreIcon />], ["Mail", <MailIcon />],
  ["Control", <MonitorIcon />, true], ["XAMPP", <XamppIcon />, true], ["Chrome", <ChromeIcon />, true], ["Code", <VsCodeIcon />, true], ["Excel", <ExcelIcon />, true],
];

function Taskbar() {
  return (
    <footer className="flex h-[30px] shrink-0 bg-linear-to-r from-[#0d3c56] via-[#0d3751] to-[#0a2b55] text-[12px] text-white">
      {system.map(([n, icon]) => (
        <button key={n} aria-label={n} className="grid w-9 place-items-center">{icon}</button>
      ))}
      <div className="ml-0.5 flex">
        {pinned.map(([n, icon, open]) => (
          <button key={n} aria-label={n} className={"flex w-[37px] flex-col items-center " + (n === "Chrome" ? "bg-[#0a5795]" : "")}>
            <span className="grid flex-1 place-items-center">{icon}</span>
            {open && <span className={"h-0.5 bg-[#90c2ef] " + (n === "Chrome" ? "w-full" : "w-7")} />}
          </button>
        ))}
      </div>
      <div className="ml-auto flex items-center pr-[3px]">
        <button aria-label="Hidden icons" className="mr-3"><svg viewBox="0 0 12 7" className="h-[7px] w-3" fill="none" stroke="#fff" strokeWidth="1.200"><path d="M.5 6.500 L6 1 L11.500 6.500" /></svg></button>
        <button aria-label="Meet now" className="mr-2"><MeetNow /></button>
        <button aria-label="Battery" className="mr-2.5"><Battery /></button>
        <button aria-label="Network" className="mr-2"><Wifi /></button>
        <button aria-label="Volume" className="mr-3"><Speaker /></button>
        <button className="mr-4">VIE</button>
        <button className="mr-4">10:43 PM</button>
        <button aria-label="Notifications"><NotifyIcon /></button>
        <span className="ml-5 h-[30px] w-px bg-[#5c7188]" />
      </div>
    </footer>
  );
}

export default function App() {
  return (
    <div className="flex h-screen flex-col overflow-hidden bg-white font-[Roboto,sans-serif]">
      <TabStrip />
      <AddressBar />
      <Bookmarks />
      <DocHeader />
      <div className="flex min-h-0 flex-1">
        <main className="flex min-w-0 flex-1 flex-col">
          <Toolbar />
          <FormulaBar />
          <GridArea />
          <SheetTabs />
        </main>
        <SidePanel />
      </div>
      <Taskbar />
    </div>
  );
}
